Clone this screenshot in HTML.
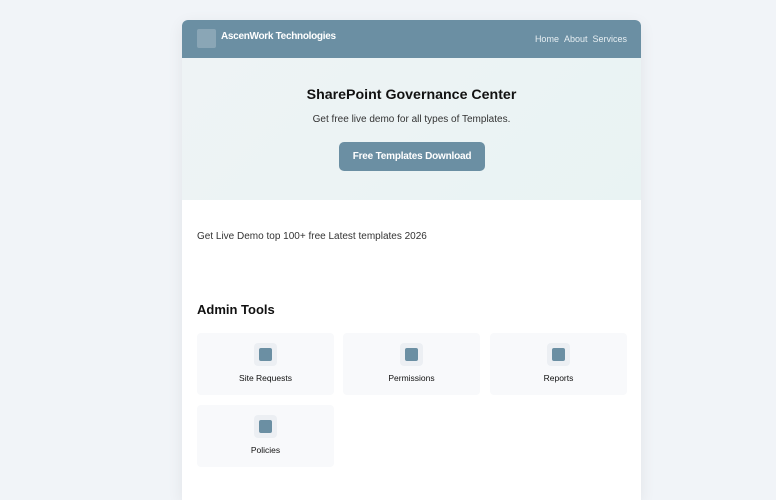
<!DOCTYPE html>
<html><head><style>
*{margin:0;padding:0;box-sizing:border-box}
body{width:776px;height:488px;overflow:hidden;background:#f1f4f8;font-family:"Liberation Sans",sans-serif;position:relative}
.card{position:absolute;left:182px;top:20px;width:459px;height:480px;background:#fff;border-radius:6px 6px 0 0;overflow:hidden;box-shadow:0 4px 16px rgba(0,0,0,0.07)}
.hdr{height:38px;background:#6b8fa3;position:relative}
.logo{position:absolute;left:15px;top:9px;width:19px;height:19px;background:#8aa6b6;border-radius:2px}
.brand{position:absolute;left:39px;top:11px;color:#fff;font-size:10px;font-weight:bold;letter-spacing:-0.3px}
.nav{position:absolute;right:14px;top:14px;color:#e6eef2;font-size:9px}
.nav span{margin-left:5px}
.hero{height:142px;background:linear-gradient(135deg,#eef3f5,#e9f3f3);text-align:center;position:relative}
.hero h1{position:absolute;left:0;right:0;top:29px;font-size:14.2px;color:#111;font-weight:bold}
.hero p{position:absolute;left:0;right:0;top:56px;font-size:10px;color:#333}
.btn{position:absolute;left:157px;top:84px;width:146px;height:29px;background:#6b8fa3;border-radius:5px;color:#fff;font-size:10px;line-height:29px;font-weight:bold;letter-spacing:-0.2px}
.txt{position:absolute;left:15px;top:211px;font-size:10px;color:#333}
.at{position:absolute;left:15px;top:282px;font-size:13px;font-weight:bold;color:#111}
.tile{position:absolute;width:137px;height:62px;background:#f8f9fb;border-radius:4px;text-align:center}
.ib{position:absolute;left:57px;top:10px;width:23px;height:23px;background:#eceff3;border-radius:4px}
.ib i{position:absolute;left:5px;top:5px;width:13px;height:13px;background:#6b8fa3;border-radius:2px}
.lb{position:absolute;left:0;right:0;top:40px;font-size:8.5px;color:#111}
</style></head><body>
<div class="card">
<div class="hdr"><div class="logo"></div><div class="brand">AscenWork Technologies</div>
<div class="nav"><span>Home</span><span>About</span><span>Services</span></div></div>
<div class="hero"><h1>SharePoint Governance Center</h1><p>Get free live demo for all types of Templates.</p><div class="btn">Free Templates Download</div></div>
<div class="txt">Get Live Demo top 100+ free Latest templates 2026</div>
<div class="at">Admin Tools</div>
<div class="tile" style="left:15px;top:313px"><div class="ib"><i></i></div><div class="lb">Site Requests</div></div>
<div class="tile" style="left:161px;top:313px"><div class="ib"><i></i></div><div class="lb">Permissions</div></div>
<div class="tile" style="left:308px;top:313px"><div class="ib"><i></i></div><div class="lb">Reports</div></div>
<div class="tile" style="left:15px;top:385px"><div class="ib"><i></i></div><div class="lb">Policies</div></div>
</div>
</body></html>
